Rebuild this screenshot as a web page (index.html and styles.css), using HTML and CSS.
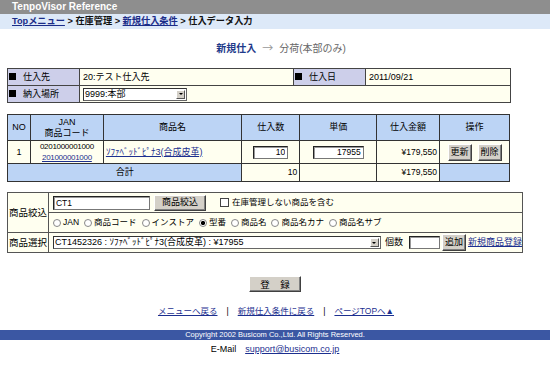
FILE: index.html
```html
<!DOCTYPE html>
<html lang="ja">
<head>
<meta charset="utf-8">
<title>TenpoVisor Reference</title>
<link rel="stylesheet" href="styles.css">
</head>
<body>
<div class="topbar">TenpoVisor Reference</div>
<div class="crumbs"><a href="#">Topメニュー</a> &gt; 在庫管理 &gt; <a href="#">新規仕入条件</a> &gt; 仕入データ入力</div>
<div class="title"><span class="cur">新規仕入</span><span class="arrow">→</span><span class="next">分荷(本部のみ)</span></div>

<table class="info">
  <tr>
    <td class="lbl w72"><span class="sq"></span>仕入先</td>
    <td class="val">20:テスト仕入先</td>
    <td class="lbl w72"><span class="sq"></span>仕入日</td>
    <td class="val w145">2011/09/21</td>
  </tr>
  <tr>
    <td class="lbl"><span class="sq"></span>納入場所</td>
    <td class="val" colspan="3"><span class="selbox place"><span class="seltext">9999:本部</span><span class="selbtn"></span></span></td>
  </tr>
</table>

<table class="items">
  <tr class="head">
    <th class="c-no">NO</th>
    <th class="c-jan">JAN<br>商品コード</th>
    <th class="c-name">商品名</th>
    <th class="c-qty">仕入数</th>
    <th class="c-price">単価</th>
    <th class="c-amt">仕入金額</th>
    <th class="c-op">操作</th>
  </tr>
  <tr class="data">
    <td class="ctr">1</td>
    <td class="ctr jan">0201000001000<br><a href="#">201000001000</a></td>
    <td class="name"><a href="#">ｿﾌｧﾍﾞｯﾄﾞﾋﾟﾅ3(合成皮革)</a></td>
    <td class="ctr"><input class="txt qty" type="text" value="10"></td>
    <td class="ctr"><input class="txt price" type="text" value="17955"></td>
    <td class="num">¥179,550</td>
    <td class="ops"><button class="btn small">更新</button><button class="btn small">削除</button></td>
  </tr>
  <tr class="total">
    <td class="blue ctr" colspan="3">合計</td>
    <td class="num">10</td>
    <td></td>
    <td class="num">¥179,550</td>
    <td class="blue"></td>
  </tr>
</table>

<table class="search">
  <tr>
    <td class="slbl" rowspan="2">商品絞込</td>
    <td class="sval">
      <div class="line">
        <input class="txt filter" type="text" value="CT1">
        <button class="btn mid">商品絞込</button>
        <label class="chk"><input class="cb" type="checkbox">在庫管理しない商品を含む</label>
      </div>
    </td>
  </tr>
  <tr>
    <td class="sval">
      <div class="line radios">
        <label><input class="rd" type="radio" name="k">JAN</label>
        <label><input class="rd" type="radio" name="k">商品コード</label>
        <label><input class="rd" type="radio" name="k">インストア</label>
        <label><input class="rd" type="radio" name="k" checked>型番</label>
        <label><input class="rd" type="radio" name="k">商品名</label>
        <label><input class="rd" type="radio" name="k">商品名カナ</label>
        <label><input class="rd" type="radio" name="k">商品名サブ</label>
      </div>
    </td>
  </tr>
  <tr>
    <td class="slbl">商品選択</td>
    <td class="sval">
      <div class="line">
        <span class="selbox prod"><span class="seltext">CT1452326 : ｿﾌｧﾍﾞｯﾄﾞﾋﾟﾅ3(合成皮革) : ¥17955</span><span class="selbtn"></span></span>
        <span class="cnt">個数</span>
        <input class="txt count" type="text" value="">
        <button class="btn small add">追加</button>
        <a href="#" class="newlink">新規商品登録</a>
      </div>
    </td>
  </tr>
</table>

<div class="submit"><button class="btn reg">登 録</button></div>

<div class="links"><a href="#">メニューへ戻る</a><span class="sep">|</span><a href="#">新規仕入条件に戻る</a><span class="sep">|</span><a href="#">ページTOPへ▲</a></div>

<div class="footer">Copyright 2002 Busicom Co.,Ltd. All Rights Reserved.</div>
<div class="mail">E-Mail<a href="#">support@busicom.co.jp</a></div>
</body>
</html>
```

FILE: styles.css
```css
* { box-sizing: border-box; }
html, body { margin: 0; padding: 0; background: #fff; }
body {
  font-family: "Liberation Sans", "Noto Sans CJK JP", sans-serif;
  font-size: 9px;
  line-height: 11px;
  color: #000;
}
a { color: #1c2f8f; text-decoration: underline; }

.topbar {
  height: 14px;
  background: #8e8e8e;
  color: #fff;
  font-weight: bold;
  font-size: 10px;
  line-height: 14px;
  padding-left: 12px;
}
.crumbs {
  height: 15px;
  background: #dde9f8;
  font-size: 9.2px;
  line-height: 15px;
  padding-left: 12px;
  font-weight: bold;
  color: #111;
}
.crumbs a { color: #1a2c88; }

.title {
  margin-top: 11px;
  height: 14px;
  font-size: 10px;
  line-height: 14px;
  text-align: center;
  padding-left: 12px;
}
.title .cur { color: #1e3a8a; font-weight: bold; }
.title .arrow { color: #999; margin: 0 6px; font-family: "Noto Sans CJK JP", sans-serif; font-size: 11px; }
.title .next { color: #666; }

table { border-collapse: collapse; }
td, th { padding: 0; }

.info {
  margin: 14px 0 0 7px;
  width: 504px;
  border: 1px solid #222;
}
.info td { border: 1px solid #444; height: 17px; }
.info .lbl {
  background: #cdcfea;
  padding-left: 1px;
  white-space: nowrap;
}
.info .w72 { width: 72px; }
.info .w145 { width: 145px; }
.info .val { background: #fffff0; padding-left: 3px; }
.sq {
  display: inline-block;
  width: 7px;
  height: 7px;
  background: #000;
  margin-right: 7px;
  vertical-align: -0.5px;
}

.selbox {
  display: inline-flex;
  align-items: center;
  height: 13px;
  border: 1px solid #666;
  border-top-color: #333;
  border-left-color: #333;
  background: #fff;
  vertical-align: middle;
  overflow: hidden;
}
.seltext { flex: 1; padding-left: 1px; white-space: nowrap; line-height: 11px; overflow: hidden; }
.selbtn {
  width: 9px;
  height: 9px;
  margin-right: 1px;
  background: #d4d0c8;
  border: 1px solid;
  border-color: #fff #555 #555 #fff;
  position: relative;
}
.selbtn::after {
  content: "";
  position: absolute;
  left: 1.5px;
  top: 2.5px;
  border-left: 2px solid transparent;
  border-right: 2px solid transparent;
  border-top: 2px solid #000;
}
.place { width: 104px; }
.prod { width: 328px; }

.items {
  margin: 11px 0 0 7px;
  width: 503px;
  border: 1px solid #222;
}
.items th, .items td { border: 1px solid #333; }
.items th {
  background: #bcd4f5;
  font-weight: normal;
  height: 26px;
  line-height: 11px;
  text-align: center;
}
.c-no { width: 23px; }
.c-jan { width: 73px; }
.c-name { width: 139px; }
.c-qty { width: 58px; }
.c-price { width: 77px; }
.c-amt { width: 63px; }
.c-op { width: 70px; }
.items td { background: #fffff0; }
.items .data td { height: 21px; }
.items .total td { height: 18px; }
.items .blue { background: #bcd4f5; }
.ctr { text-align: center; }
.num { text-align: right; padding-right: 2px; font-size: 8.5px; }
.jan { line-height: 11px; font-size: 8px; letter-spacing: -0.3px; }
.name { padding-left: 2px; }
.ops { text-align: center; white-space: nowrap; }
.ops .btn + .btn { margin-left: 6px; }

.txt {
  height: 13px;
  border: 1px solid #777;
  border-top-color: #222;
  border-left-color: #222;
  box-shadow: inset 1px 1px 0 #999;
  font: 8.5px/11px "Liberation Sans", "Noto Sans CJK JP", sans-serif;
  padding: 0 2px;
  background: #fff;
  vertical-align: middle;
  margin: 0;
}
.qty { width: 35px; text-align: right; }
.price { width: 51px; text-align: right; }
.filter { width: 97px; text-align: left; height: 14px; }
.count { width: 31px; }

.btn {
  background: #d4d0c8;
  border: 1px solid;
  border-color: #fff #404040 #404040 #fff;
  box-shadow: inset -1px -1px 0 #808080;
  font: 9px/13px "Liberation Sans", "Noto Sans CJK JP", sans-serif;
  color: #000;
  padding: 0 3px;
  margin: 0;
  vertical-align: middle;
}
.small { height: 17px; width: 24px; padding: 0; }
.mid { height: 16px; width: 52px; padding: 0; }
.reg { height: 16px; width: 52px; padding: 0; }

.search {
  margin: 10px 0 0 7px;
  width: 516px;
  border: 1px solid #222;
}
.search td { border: 1px solid #555; background: #fffff0; height: 20px; }
.search .slbl { width: 41px; text-align: center; white-space: nowrap; font-size: 9.5px; }
.search .sval { padding-left: 4px; }
.line { display: flex; align-items: center; white-space: nowrap; height: 17px; }
.line .mid { margin-left: 4px; }
.chk { display: inline-flex; align-items: center; margin-left: 14px; font-size: 8.5px; }
.cb {
  appearance: none;
  width: 9px;
  height: 9px;
  margin: 0 3px 0 0;
  border: 1px solid #444;
  background: #fff;
}
.radios { font-size: 8.5px; }
.radios label { display: inline-flex; align-items: center; margin-right: 5px; }
.rd {
  appearance: none;
  width: 8px;
  height: 8px;
  margin: 0 2px 0 0;
  border: 1px solid #888;
  border-radius: 50%;
  background: #fff;
}
.rd:checked { background: radial-gradient(circle, #000 0 1.8px, #fff 2.4px); }
.cnt { margin: 0 6px 0 4px; }
.add { margin-left: 2px; }
.newlink { margin-left: 2px; }

.submit { margin-top: 23px; text-align: center; height: 16px; }
.reg { font-size: 9.5px; letter-spacing: 4px; text-indent: 4px; }

.links { margin-top: 13px; text-align: center; line-height: 12px; padding-left: 2px; font-size: 8.5px; }
.links .sep { margin: 0 9px; color: #000; }

.footer {
  margin-top: 13px;
  height: 10px;
  background: #3b57a3;
  color: #fff;
  font-size: 7.5px;
  line-height: 10px;
  text-align: center;
}
.mail { margin-top: 3px; text-align: center; line-height: 12px; }
.mail a { margin-left: 9px; }
```
